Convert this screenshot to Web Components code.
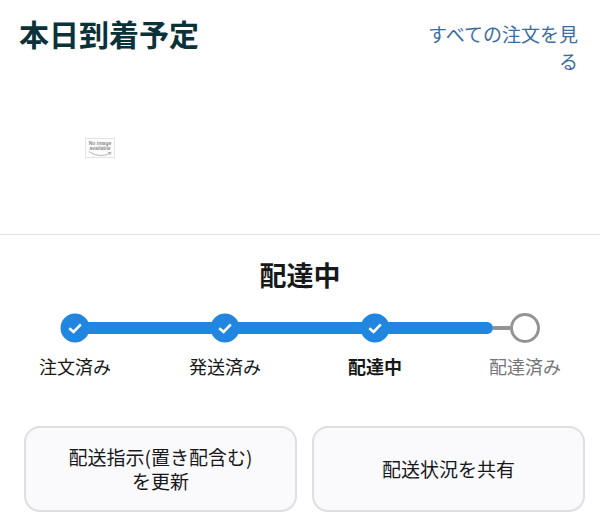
<!DOCTYPE html>
<html lang="ja">
<head>
<meta charset="utf-8">
<meta name="viewport" content="width=device-width, initial-scale=1">
<title>本日到着予定</title>
<style>
  body {
    margin: 0;
    background: #fff;
    color: #171819;
    font-family: "Noto Sans CJK JP", sans-serif;
  }
</style>
</head>
<body>
<order-header heading="本日到着予定">
  <no-image></no-image>
</order-header>
<delivery-status heading="配達中">
  <progress-step state="done" position="first">注文済み</progress-step>
  <progress-step state="done">発送済み</progress-step>
  <progress-step state="current">配達中</progress-step>
  <progress-step state="todo" position="last">配達済み</progress-step>
</delivery-status>
<action-bar>
  <action-button>配送指示(置き配含む)を更新</action-button>
  <action-button>配送状況を共有</action-button>
</action-bar>

<script>
class OrderHeader extends HTMLElement {
  constructor() {
    super();
    this.attachShadow({ mode: "open" });
    this.shadowRoot.innerHTML = `
    <style>
      :host {
        display: block;
        border-bottom: 1px solid #e2e3e5;
      }

      header {
        display: flex;
        justify-content: space-between;
        align-items: flex-start;
        padding: 10px 22px 0 19px;
      }

      h1 {
        margin: 0;
        color: #0b3238;
        font-size: 30px;
        line-height: 46px;
        font-weight: 700;
      }

      a {
        max-width: 160px;
        padding-top: 10px;
        color: #3c6d9f;
        font-size: 19px;
        line-height: 27px;
        text-align: right;
        text-decoration: none;
      }

      .items {
        padding: 64px 85px 76px;
      }
    </style>
    <header>
      <h1></h1>
      <a href="#orders">すべての注文を見る</a>
    </header>
    <div class="items"><slot></slot></div>`;
  }

  connectedCallback() {
    this.shadowRoot.querySelector("h1").textContent = this.getAttribute("heading");
  }
}

class NoImage extends HTMLElement {
  constructor() {
    super();
    this.attachShadow({ mode: "open" });
    this.shadowRoot.innerHTML = `
    <style>
      :host {
        display: block;
      }

      svg {
        display: block;
      }

      text {
        fill: #8b8b8d;
        font: 700 5px "Liberation Sans", sans-serif;
        text-anchor: middle;
      }
    </style>
    <svg width="30" height="20" viewBox="0 0 30 20">
      <rect x="0.5" y="0.5" width="29" height="19" fill="#fdfdfd" stroke="#e4e4e4"/>
      <text x="15" y="7">No image</text>
      <text x="15" y="12">available</text>
      <path d="M4 13.5Q14 20.5 25 15.5M23 14.5L26 14.5L25 17" fill="none" stroke="#b4b4b6"/>
    </svg>`;
  }
}

class DeliveryStatus extends HTMLElement {
  constructor() {
    super();
    this.attachShadow({ mode: "open" });
    this.shadowRoot.innerHTML = `
    <style>
      :host {
        display: block;
        padding-top: 20px;
      }

      h2 {
        margin: 0 0 18px;
        font-size: 27px;
        line-height: 40px;
        font-weight: 700;
        text-align: center;
      }

      .steps {
        display: grid;
        grid-template-columns: repeat(4, 1fr);
      }
    </style>
    <h2></h2>
    <div class="steps" role="list"><slot></slot></div>`;
  }

  connectedCallback() {
    this.shadowRoot.querySelector("h2").textContent = this.getAttribute("heading");
  }
}

class ProgressStep extends HTMLElement {
  constructor() {
    super();
    this.attachShadow({ mode: "open" });
    this.shadowRoot.innerHTML = `
    <style>
      :host {
        display: block;
        --blue: #2186e0;
        --grey: #949494;
      }

      .track {
        display: flex;
        align-items: center;
      }

      .line {
        flex: 1;
        height: 12px;
        background: var(--blue);
      }

      .before {
        margin-right: -3px;
      }

      .after {
        margin-left: -3px;
      }

      svg {
        display: block;
        flex: none;
      }

      circle {
        fill: var(--blue);
        stroke: var(--blue);
        stroke-width: 2;
      }

      path {
        fill: none;
        stroke: #fff;
        stroke-width: 2.6;
      }

      .label {
        margin-top: 9px;
        font-size: 18px;
        line-height: 28px;
        text-align: center;
      }

      :host([position="first"]) .before,
      :host([position="last"]) .after {
        visibility: hidden;
      }

      :host([state="current"]) .label {
        font-weight: 700;
      }

      /* the last stretch is only partly travelled */
      :host([state="todo"]) .line {
        display: flex;
        align-items: center;
        margin: 0;
        background: none;
      }

      :host([state="todo"]) .before::before {
        content: "";
        width: 72%;
        height: 12px;
        border-radius: 0 6px 6px 0;
        background: var(--blue);
      }

      :host([state="todo"]) .before::after {
        content: "";
        flex: 1;
        height: 4px;
        background: var(--grey);
      }

      :host([state="todo"]) circle {
        fill: #fff;
        stroke: var(--grey);
        stroke-width: 3;
      }

      :host([state="todo"]) path {
        display: none;
      }

      :host([state="todo"]) .label {
        color: #757677;
      }
    </style>
    <div class="track">
      <div class="line before"></div>
      <svg width="30" height="30" viewBox="0 0 30 30">
        <circle cx="15" cy="15" r="13.5"/>
        <path d="M9.3 15.2L13.6 18.9L20.8 11.4"/>
      </svg>
      <div class="line after"></div>
    </div>
    <div class="label"><slot></slot></div>`;
  }

  connectedCallback() {
    this.setAttribute("role", "listitem");
  }
}

class ActionBar extends HTMLElement {
  constructor() {
    super();
    this.attachShadow({ mode: "open" });
    this.shadowRoot.innerHTML = `
    <style>
      :host {
        display: grid;
        grid-template-columns: 1fr 1fr;
        gap: 15px;
        padding: 46px 15px 14px 24px;
      }
    </style>
    <slot></slot>`;
  }
}

class ActionButton extends HTMLElement {
  constructor() {
    super();
    this.attachShadow({ mode: "open" });
    this.shadowRoot.innerHTML = `
    <style>
      :host {
        display: grid;
      }

      button {
        min-height: 86px;
        padding: 16px 36px;
        border: 2px solid #dedfe4;
        border-radius: 16px;
        background: #fafafd;
        color: inherit;
        font-family: inherit;
        font-size: 19px;
        line-height: 24px;
        cursor: pointer;
      }
    </style>
    <button type="button"><slot></slot></button>`;
  }
}

customElements.define("order-header", OrderHeader);
customElements.define("no-image", NoImage);
customElements.define("delivery-status", DeliveryStatus);
customElements.define("progress-step", ProgressStep);
customElements.define("action-bar", ActionBar);
customElements.define("action-button", ActionButton);
</script>
</body>
</html>
